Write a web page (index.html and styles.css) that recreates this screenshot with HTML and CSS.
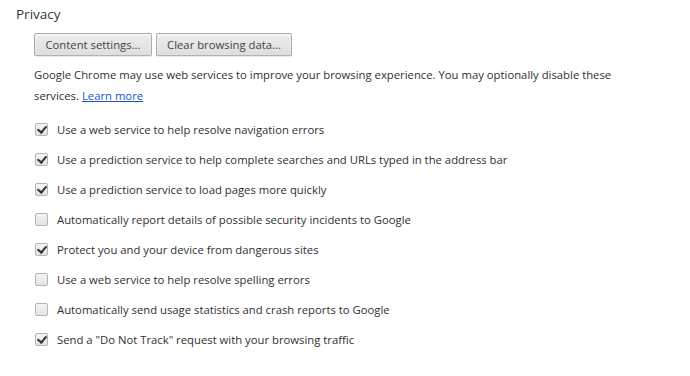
FILE: index.html
```html
<!DOCTYPE html>
<html lang="en">
  <head>
    <meta charset="UTF-8" />
    <title>Privacy</title>
    <link rel="stylesheet" href="styles.css">
  </head>
  <body>
    <section class="section">
      <h3>Privacy</h3>
      <div class="section-body">
        <div class="buttons">
          <button type="button" class="btn btn-content">Content settings...</button>
          <button type="button" class="btn btn-clear">Clear browsing data...</button>
        </div>
        <p class="note">Google Chrome may use web services to improve your browsing experience. You may optionally disable these services. <a href="#">Learn more</a></p>

        <label class="option"><input type="checkbox" checked><span class="box"></span>Use a web service to help resolve navigation errors</label>
        <label class="option"><input type="checkbox" checked><span class="box"></span>Use a prediction service to help complete searches and URLs typed in the address bar</label>
        <label class="option"><input type="checkbox" checked><span class="box"></span>Use a prediction service to load pages more quickly</label>
        <label class="option"><input type="checkbox"><span class="box"></span>Automatically report details of possible security incidents to Google</label>
        <label class="option"><input type="checkbox" checked><span class="box"></span>Protect you and your device from dangerous sites</label>
        <label class="option"><input type="checkbox"><span class="box"></span>Use a web service to help resolve spelling errors</label>
        <label class="option"><input type="checkbox"><span class="box"></span>Automatically send usage statistics and crash reports to Google</label>
        <label class="option"><input type="checkbox" checked><span class="box"></span>Send a "Do Not Track" request with your browsing traffic</label>
      </div>
    </section>
  </body>
</html>
```

FILE: styles.css
```css
body {
  font-family: "Open Sans", "Noto Sans", Arial, sans-serif;
  font-size: 11.3px;
  color: #303030;
  background-color: #fff;
  margin: 0;
  padding: 0;
}

.section {
  padding: 4px 0 0 16px;
}

h3 {
  font-size: 13.5px;
  font-weight: normal;
  color: #303942;
  margin: 0;
  line-height: 20px;
}

.section-body {
  padding-left: 18px;
}

.buttons {
  display: flex;
  gap: 4px;
  margin-top: 9px;
}

.btn {
  font-family: inherit;
  font-size: 11.3px;
  color: #444;
  height: 23px;
  padding: 0 8px;
  border: 1px solid rgba(0, 0, 0, 0.25);
  border-radius: 2px;
  background: linear-gradient(#ededed, #dedede);
  box-shadow: 0 1px 0 rgba(0, 0, 0, 0.08), inset 0 1px 2px rgba(255, 255, 255, 0.75);
}

.btn-content {
  width: 118px;
}

.btn-clear {
  width: 136px;
}

.note {
  margin: 8px 0 8px;
  line-height: 21px;
  width: 620px;
}

.note a {
  color: #15c;
}

.option {
  display: flex;
  align-items: center;
  height: 30px;
}

.option input {
  display: none;
}

.box {
  width: 13px;
  height: 13px;
  box-sizing: border-box;
  margin: 0 9px 0 1px;
  border: 1px solid #b4b4b4;
  border-radius: 2px;
  background: linear-gradient(#f4f4f4, #e4e4e4);
  position: relative;
}

.option input:checked + .box::after {
  content: "";
  position: absolute;
  left: 3px;
  top: 0;
  width: 4px;
  height: 7px;
  border: solid #333;
  border-width: 0 2.5px 2.5px 0;
  transform: rotate(40deg);
}
```
